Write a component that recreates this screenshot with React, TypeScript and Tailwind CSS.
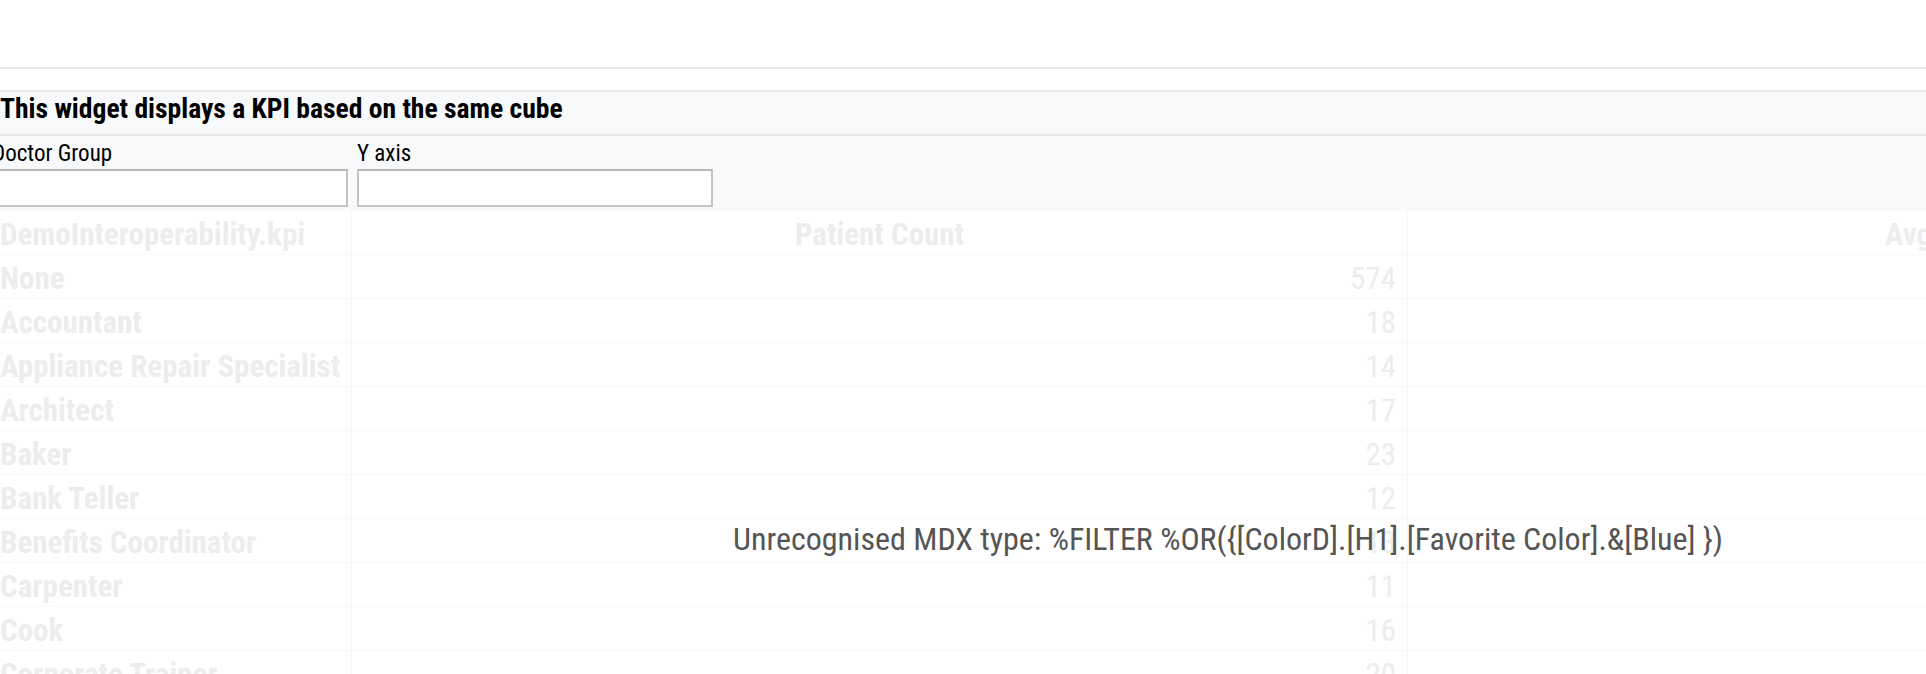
import * as React from 'react'

const rows: [string, string][] = [
  ['None', '574'],
  ['Accountant', '18'],
  ['Appliance Repair Specialist', '14'],
  ['Architect', '17'],
  ['Baker', '23'],
  ['Bank Teller', '12'],
  ['Benefits Coordinator', '13'],
  ['Carpenter', '11'],
  ['Cook', '16'],
  ['Corporate Trainer', '20'],
]

function FilterField({ label }: { label: string }) {
  return (
    <div className="flex w-[356px] flex-col">
      <label className="text-[23px] leading-[27px] text-black whitespace-nowrap">{label}</label>
      <input
        type="text"
        className="mt-[2px] h-[38px] w-full border-2 border-[#c4c4c4] border-t-[#b9b9b9] bg-white outline-none"
      />
    </div>
  )
}

export default function App() {
  return (
    <div className="relative h-[674px] w-[1926px] overflow-hidden bg-white font-['Roboto',sans-serif] font-stretch-condensed">
      <div className="h-[67px]" />
      <div className="h-[2px] bg-[#e6e7e8]" />
      <div className="h-[21px]" />

      {/* widget header */}
      <div className="flex h-[46px] items-center border-y-2 border-[#e6e7e8] bg-[#f8f9fb] pb-[8px]">
        <h2 className="text-[27.6px] font-bold leading-none text-black whitespace-nowrap">
          This widget displays a KPI based on the same cube
        </h2>
      </div>

      {/* filters */}
      <div className="-ml-2 flex h-[75px] gap-[9px] bg-[#f8f9fb] pt-[4px]">
        <FilterField label="Doctor Group" />
        <FilterField label="Y axis" />
      </div>

      {/* faded pivot table */}
      <div className="text-[31px] text-[#ededed]">
        <div className="flex h-[44px] items-center border-b border-[#f7f7f7] font-bold">
          <div className="flex h-full w-[352px] shrink-0 items-center border-r border-[#f5f5f5] pt-[5px] whitespace-nowrap">
            DemoInteroperability.kpi
          </div>
          <div className="flex h-full w-[1056px] shrink-0 items-center justify-center border-r border-[#f5f5f5] pt-[5px]">
            Patient Count
          </div>
          <div className="flex h-full w-[1000px] shrink-0 items-center pl-[477px] pt-[5px] whitespace-nowrap">
            Avg Age
          </div>
        </div>
        {rows.map(([name, count]) => (
          <div key={name} className="flex h-[44px] items-center border-b border-[#f7f7f7]">
            <div className="flex h-full w-[352px] shrink-0 items-center border-r border-[#f5f5f5] pt-[5px] font-bold whitespace-nowrap">
              {name}
            </div>
            <div className="flex h-full w-[1056px] shrink-0 items-center justify-end border-r border-[#f5f5f5] pr-[11px] pt-[5px]">
              {count}
            </div>
            <div className="h-full w-[1000px] shrink-0" />
          </div>
        ))}
      </div>

      {/* error overlay */}
      <div className="absolute left-[733px] top-[522px] whitespace-nowrap text-[32px] leading-[34px] text-[#555555]">
        Unrecognised MDX type: %FILTER %OR({'{'}[ColorD].[H1].[Favorite Color].&amp;[Blue] {'}'})
      </div>
    </div>
  )
}
